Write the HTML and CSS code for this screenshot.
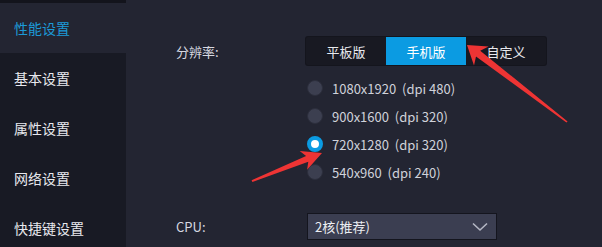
FILE: index.html
```html
<!DOCTYPE html>
<html lang="zh">
<head>
<meta charset="utf-8">
<link rel="stylesheet" href="styles.css">
</head>
<body>
<div class="app">
  <nav class="sidebar">
    <div class="nav-item active">性能设置</div>
    <div class="nav-item">基本设置</div>
    <div class="nav-item">属性设置</div>
    <div class="nav-item">网络设置</div>
    <div class="nav-item">快捷键设置</div>
  </nav>
  <main class="main">
    <div class="row res-row">
      <div class="label">分辨率:</div>
      <div class="segmented">
        <div class="seg">平板版</div>
        <div class="seg on">手机版</div>
        <div class="seg">自定义</div>
      </div>
    </div>
    <div class="radios">
      <div class="radio-row"><span class="radio"></span><span class="rtext">1080x1920&nbsp;&nbsp;(dpi 480)</span></div>
      <div class="radio-row"><span class="radio"></span><span class="rtext">900x1600&nbsp;&nbsp;(dpi 320)</span></div>
      <div class="radio-row"><span class="radio checked"></span><span class="rtext">720x1280&nbsp;&nbsp;(dpi 320)</span></div>
      <div class="radio-row"><span class="radio"></span><span class="rtext">540x960&nbsp;&nbsp;(dpi 240)</span></div>
    </div>
    <div class="row cpu-row">
      <div class="label">CPU:</div>
      <div class="select">
        <span>2核(推荐)</span>
        <svg class="chev" width="16" height="10" viewBox="0 0 16 10"><path d="M1 1.5 L8 8 L15 1.5" fill="none" stroke="#b4b7c4" stroke-width="1.6"/></svg>
      </div>
    </div>
  </main>
</div>
<svg class="arrows" width="602" height="247" viewBox="0 0 602 247">
  <polygon fill="#ee3434" points="467,45 488.6,46.5 480.2,50.8 567.6,121.4 566.4,122.6 476,56.4 474,65.5"/>
  <polygon fill="#ee3434" points="322,153 299.7,151.1 306.1,156.1 251.6,180.2 252.4,182 308.3,161.7 307.1,169.7"/>
</svg>
</body>
</html>
```

FILE: styles.css
```css
html, body {
  margin: 0;
  padding: 0;
  width: 602px;
  height: 247px;
  overflow: hidden;
  background: #232532;
  font-family: "Noto Sans CJK SC", "Noto Sans", sans-serif;
  color: #d6d8e0;
}
.app {
  display: flex;
  height: 247px;
  position: relative;
}
.sidebar {
  width: 126px;
  flex: none;
  background: #181a24;
  border-top: 3px solid #13141c;
  box-sizing: border-box;
  height: 247px;
}
.nav-item {
  height: 50px;
  display: flex;
  align-items: center;
  padding-left: 14px;
  font-size: 14px;
  color: #e8e9ee;
}
.nav-item.active {
  background: #232532;
  color: #1c9ad8;
}
.main {
  flex: 1;
  padding-left: 50px;
  padding-top: 37px;
}
.row {
  display: flex;
  align-items: center;
}
.label {
  width: 130px;
  font-size: 13px;
  color: #d6d8e0;
}
.segmented {
  display: flex;
  width: 240px;
  height: 28px;
  background: #181922;
  border-radius: 2px;
  box-shadow: 0 0 0 1px #14151d;
}
.seg {
  width: 80px;
  display: flex;
  align-items: center;
  justify-content: center;
  font-size: 13px;
  color: #e8e9ee;
}
.seg.on {
  background: #0b9be2;
  color: #ffffff;
}
.radios {
  margin-top: 9px;
  padding-left: 131px;
}
.radio-row {
  height: 28px;
  display: flex;
  align-items: center;
}
.radio {
  width: 16px;
  height: 16px;
  border-radius: 50%;
  box-sizing: border-box;
  background: #3c3f50;
  border: 1px solid #2c2e3c;
  margin-right: 9px;
  flex: none;
}
.radio.checked {
  background: #ffffff;
  border: 4px solid #0b9be2;
}
.rtext {
  font-size: 13px;
  color: #d0d2da;
}
.cpu-row {
  margin-top: 27px;
}
.select {
  margin-left: 1px;
  width: 190px;
  height: 27px;
  box-sizing: border-box;
  background: #3b3e51;
  border: 1px solid #14151e;
  display: flex;
  align-items: center;
  justify-content: space-between;
  padding: 0 8px 0 7px;
  font-size: 13px;
  color: #eceef3;
}
.arrows {
  position: absolute;
  left: 0;
  top: 0;
  pointer-events: none;
}
```
